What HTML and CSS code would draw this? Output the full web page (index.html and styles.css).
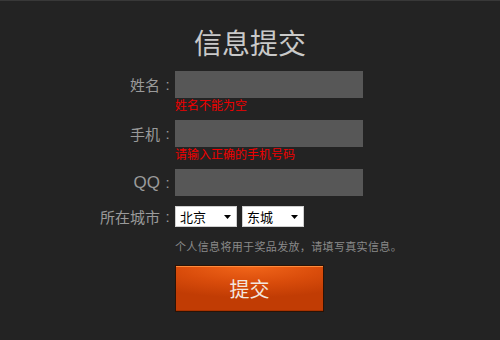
FILE: index.html
```html
<!DOCTYPE html>
<html lang="zh-CN">
<head>
<meta charset="utf-8">
<title>信息提交</title>
<link rel="stylesheet" href="styles.css">
</head>
<body>
<div class="page">
  <h1 class="title">信息提交</h1>
  <form class="form">
    <div class="row row-name">
      <label class="label">姓名<span class="colon">:</span></label>
      <div class="field">
        <input class="input" type="text">
        <div class="error">姓名不能为空</div>
      </div>
    </div>
    <div class="row row-phone">
      <label class="label">手机<span class="colon">:</span></label>
      <div class="field">
        <input class="input" type="text">
        <div class="error">请输入正确的手机号码</div>
      </div>
    </div>
    <div class="row row-qq">
      <label class="label label-latin">QQ<span class="colon">:</span></label>
      <div class="field">
        <input class="input" type="text">
      </div>
    </div>
    <div class="row row-city">
      <label class="label">所在城市<span class="colon">:</span></label>
      <div class="field selects">
        <div class="select"><span class="select-text">北京</span><svg class="arrow" width="7" height="4" viewBox="0 0 7 4"><path d="M0 0H7L3.5 4Z" fill="#000"/></svg></div>
        <div class="select"><span class="select-text">东城</span><svg class="arrow" width="7" height="4" viewBox="0 0 7 4"><path d="M0 0H7L3.5 4Z" fill="#000"/></svg></div>
      </div>
    </div>
    <p class="notice">个人信息将用于奖品发放，请填写真实信息。</p>
    <div class="actions">
      <button class="submit" type="button">提交</button>
    </div>
  </form>
</div>
</body>
</html>
```
FILE: styles.css
```css
html, body {
  margin: 0;
  padding: 0;
}
body {
  width: 500px;
  height: 340px;
  background: #232323;
  font-family: "Noto Sans CJK SC", "Liberation Sans", sans-serif;
  overflow: hidden;
}
.page {
  height: 339px;
  border-top: 1px solid #383838;
}
.title {
  margin: 26px 0 0;
  height: 30px;
  line-height: 30px;
  font-size: 28px;
  font-weight: normal;
  color: #c9c9c9;
  text-align: center;
}
.form {
  margin: 14px 0 0;
  display: flex;
  flex-direction: column;
}
.row {
  display: flex;
  align-items: flex-start;
}
.row-phone { margin-top: 8px; }
.row-qq { margin-top: 8px; }
.row-city { margin-top: 10px; }
.label {
  width: 175px;
  flex: none;
  display: flex;
  justify-content: flex-end;
  align-items: center;
  height: 27px;
  font-size: 15px;
  color: #9a9a9a;
}
.label-latin {
  font-family: "Liberation Sans", sans-serif;
  font-size: 17px;
}
.colon {
  width: 15px;
  text-align: center;
  font-family: "Liberation Sans", sans-serif;
  font-size: 15px;
}
.row-city .label {
  height: 21px;
}
.field {
  display: flex;
  flex-direction: column;
}
.input {
  width: 188px;
  height: 27px;
  margin: 0;
  padding: 0;
  border: none;
  background: #575757;
  box-sizing: border-box;
}
.error {
  height: 14px;
  line-height: 14px;
  font-size: 12px;
  color: #f00000;
}
.selects {
  flex-direction: row;
  gap: 5px;
}
.select {
  position: relative;
  width: 62px;
  height: 21px;
  box-sizing: border-box;
  background: #fff;
  border: 1px solid #cfcfcf;
  display: flex;
  align-items: center;
  padding-left: 4px;
}
.select-text {
  font-size: 13px;
  color: #000;
  line-height: 19px;
}
.arrow {
  position: absolute;
  right: 5px;
  top: 8px;
}
.notice {
  margin: 11px 0 0 175px;
  height: 16px;
  line-height: 16px;
  font-size: 11px;
  letter-spacing: 0.35px;
  color: #8a8a8a;
}
.actions {
  margin: 11px 0 0 175px;
}
.submit {
  width: 149px;
  height: 47px;
  margin: 0;
  padding: 0;
  border: 1px solid #2a1306;
  background: radial-gradient(ellipse 90% 70% at 50% 0%, #f2661a 0%, #d94c0b 55%, #c13c04 100%);
  box-shadow: inset 0 1px 0 #ff8a3a, inset 0 -1px 0 #a93200;
  color: #f3e6de;
  font-family: "Noto Sans CJK SC", sans-serif;
  font-size: 20px;
  line-height: 45px;
  cursor: pointer;
}
```
